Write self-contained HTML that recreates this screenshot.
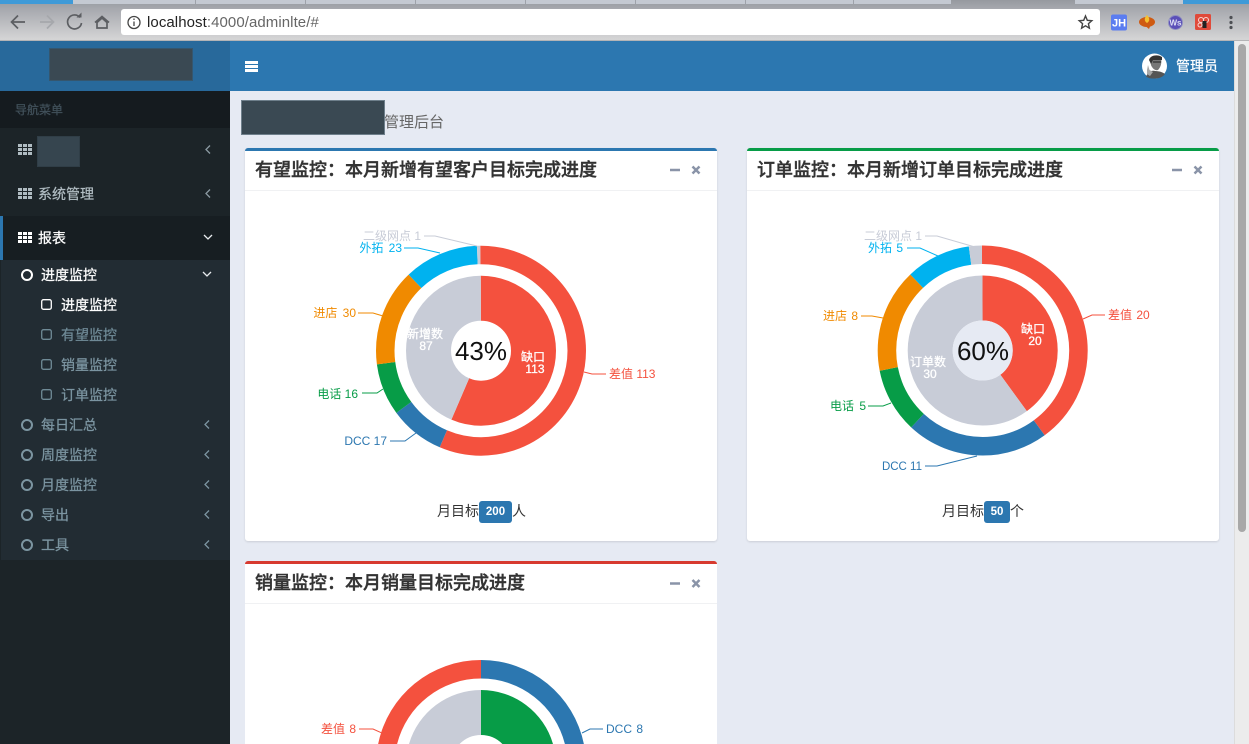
<!DOCTYPE html>
<html lang="zh"><head><meta charset="utf-8"><title>管理后台</title>
<style>
html,body{margin:0;padding:0;width:1249px;height:744px;overflow:hidden;background:#e6eaf3;font-family:"Liberation Sans","Noto Sans CJK SC",sans-serif}
body{position:relative}
div,span{position:absolute;box-sizing:border-box}
.t{white-space:nowrap;line-height:20px;font-size:14px;-webkit-text-stroke:.25px currentColor}
.box{background:#fff;border-radius:3px;box-shadow:0 1px 2px rgba(0,0,0,.12);border-top:3px solid #2c77b0}
.box .hd{left:0;right:0;top:0;height:40px;border-bottom:1px solid #f0f1f3}
.box .tt{left:10px;top:9px;font-size:18px;line-height:20px;color:#333;font-weight:500;white-space:nowrap;-webkit-text-stroke:.4px #333}
.foot{font-size:14px;color:#333;line-height:20px;white-space:nowrap}
.badge{background:#2c77b0;color:#fff;font-size:11.5px;font-weight:bold;border-radius:3px;text-align:center;line-height:23px;height:22px}
svg{position:absolute;left:0;top:0;display:block}
svg text{font-family:"Liberation Sans","Noto Sans CJK SC",sans-serif}
</style></head><body>

<!-- browser chrome -->
<div style="left:0;top:0;width:1249px;height:41px;background:linear-gradient(#96999f 0,#a5a7ad 8px,#d4d4d5 39px);border-bottom:1px solid #b4b4b6"></div>
<div style="left:73px;top:0;width:878px;height:4px;background:#c4c9d2"></div>
<div style="left:1075px;top:0;width:108px;height:4px;background:#c4c9d2"></div>
<div style="left:0;top:0;width:73px;height:4px;background:#3f9ad8"></div>
<div style="left:1183px;top:0;width:66px;height:4px;background:#3f9ad8"></div>
<div style="left:195px;top:0;width:1px;height:4px;background:#9ea2aa"></div>
<div style="left:305px;top:0;width:1px;height:4px;background:#9ea2aa"></div>
<div style="left:415px;top:0;width:1px;height:4px;background:#9ea2aa"></div>
<div style="left:525px;top:0;width:1px;height:4px;background:#9ea2aa"></div>
<div style="left:635px;top:0;width:1px;height:4px;background:#9ea2aa"></div>
<div style="left:745px;top:0;width:1px;height:4px;background:#9ea2aa"></div>
<div style="left:853px;top:0;width:1px;height:4px;background:#9ea2aa"></div>
<div style="left:121px;top:9px;width:979px;height:26px;background:#fff;border-radius:3px"></div>
<div style="left:147px;top:13px;font-size:15px;line-height:20px;white-space:nowrap;letter-spacing:.07px;color:#666"><span style="position:static;color:#222">localhost</span>:4000/adminlte/#</div>

<!-- header -->
<div style="left:0;top:41px;width:230px;height:50px;background:#28699b"></div>
<div style="left:230px;top:41px;width:1004px;height:50px;background:#2c77b0"></div>
<div style="left:49px;top:48px;width:144px;height:33px;background:#3a4953;border:1px solid #35566e"></div>
<div style="left:245px;top:61px;width:13px;height:2.500px;background:#fff"></div>
<div style="left:245px;top:65px;width:13px;height:2.500px;background:#fff"></div>
<div style="left:245px;top:69px;width:13px;height:2.500px;background:#fff"></div>
<div class="t" style="left:1176px;top:56px;color:#fff">管理员</div>

<!-- sidebar -->
<div style="left:0;top:91px;width:230px;height:653px;background:#1c2428"></div>
<div style="left:0;top:91px;width:230px;height:37px;background:#151b1f"></div>
<div style="left:0;top:216px;width:230px;height:44px;background:#171e22"></div>
<div style="left:0;top:216px;width:3px;height:44px;background:#2c77b0"></div>
<div style="left:1px;top:260px;width:229px;height:300px;background:#222c33"></div>
<div style="left:37px;top:136px;width:43px;height:31px;background:#36454f;border:1px solid #303e47"></div>
<div class="t" style="left:15px;top:100px;font-size:12px;color:#41505a">导航菜单</div>
<div class="t" style="left:38px;top:184px;color:#b0bcc2">系统管理</div>
<div class="t" style="left:38px;top:228px;color:#fff">报表</div>
<div class="t" style="left:41px;top:265px;color:#fff">进度监控</div>
<div class="t" style="left:61px;top:295px;color:#fff">进度监控</div>
<div class="t" style="left:61px;top:325px;color:#6f8a96">有望监控</div>
<div class="t" style="left:61px;top:355px;color:#7c95a1">销量监控</div>
<div class="t" style="left:61px;top:385px;color:#7c95a1">订单监控</div>
<div class="t" style="left:41px;top:415px;color:#7c95a1">每日汇总</div>
<div class="t" style="left:41px;top:445px;color:#7c95a1">周度监控</div>
<div class="t" style="left:41px;top:475px;color:#7c95a1">月度监控</div>
<div class="t" style="left:41px;top:505px;color:#7c95a1">导出</div>
<div class="t" style="left:41px;top:535px;color:#7c95a1">工具</div>

<!-- content -->
<div style="left:241px;top:100px;width:144px;height:35px;background:#3a4953;border:1px solid #6e7f8b"></div>
<div style="left:384px;top:113px;font-size:15px;line-height:20px;white-space:nowrap;color:#666">管理后台</div>

<div class="box" style="left:245px;top:148px;width:472px;height:393px;border-top-color:#2c77b0">
  <div class="hd"></div><div class="tt">有望监控：本月新增有望客户目标完成进度</div>
</div>
<div class="box" style="left:747px;top:148px;width:472px;height:393px;border-top-color:#079c47">
  <div class="hd"></div><div class="tt">订单监控：本月新增订单目标完成进度</div>
</div>
<div class="box" style="left:245px;top:561px;width:472px;height:183px;border-radius:3px 3px 0 0;box-shadow:none;border-top-color:#d73a2f">
  <div class="hd"></div><div class="tt">销量监控：本月销量目标完成进度</div>
</div>

<div class="foot" style="left:437px;top:501px">月目标</div>
<div class="badge" style="left:479px;top:501px;width:33px">200</div>
<div class="foot" style="left:512px;top:501px">人</div>
<div class="foot" style="left:942px;top:501px">月目标</div>
<div class="badge" style="left:984px;top:501px;width:26px">50</div>
<div class="foot" style="left:1010px;top:501px">个</div>

<!-- scrollbar -->
<div style="left:1234px;top:41px;width:15px;height:703px;background:#ececec;border-left:1px solid #dcdcdc"></div>
<div style="left:1238px;top:44px;width:8px;height:488px;background:#a8a8a8;border-radius:4px"></div>

<svg width="1249" height="744" viewBox="0 0 1249 744" fill="none">
  <!-- toolbar icons -->
  <g stroke="#5c5e62" stroke-width="1.7">
    <path d="M25 22H12M18 15.5L11.5 22L18 28.5"/>
    <path d="M40 22H53M47 15.5L53.5 22L47 28.5" stroke="#a6a8ac"/>
    <path d="M80 17.5A7 7 0 1 0 81.5 23"/>
    <path d="M97 28V22.500L102 18L107 22.500V28H97Z"/>
  </g>
  <path d="M76.500 17.500H81.500V12.500Z" fill="#5c5e62"/>
  <path d="M95 22.500L102 16.500L109 22.500" stroke="#5c5e62" stroke-width="1.700"/>
  <circle cx="134" cy="22.500" r="6" stroke="#444" stroke-width="1.300"/>
  <path d="M134 21.500V26M134 18.500V20" stroke="#444" stroke-width="1.300"/>
  <path d="M1085.500 16L1087.300 20.300L1091.800 20.700L1088.400 23.700L1089.400 28.200L1085.500 25.800L1081.600 28.200L1082.600 23.700L1079.200 20.700L1083.700 20.300Z" stroke="#444" stroke-width="1.400"/>
  <rect x="1111" y="14.500" width="16" height="16" rx="2" fill="#5b7df0"/>
  <text x="1119" y="26.500" font-size="11" font-weight="bold" fill="#fff" text-anchor="middle">JH</text>
  <ellipse cx="1147" cy="22" rx="8" ry="5" fill="#cf5a12"/>
  <path d="M1147 15C1150 18 1150 21 1147 23C1144 21 1144 18 1147 15Z" fill="#f5c030"/>
  <path d="M1146 26.500L1150 26.500L1149 29Z" fill="#cf5a12"/>
  <circle cx="1175.500" cy="22.500" r="7" fill="#5b4fb8" stroke="#8f8fc0"/>
  <text x="1175.500" y="25.500" font-size="8" font-weight="bold" fill="#dfe0f5" text-anchor="middle">Ws</text>
  <rect x="1195" y="14" width="16" height="16" rx="1.500" fill="#e04a3a"/>
  <g stroke="#f8d8d4" stroke-width="1"><circle cx="1201" cy="20" r="2.500"/><circle cx="1206" cy="20" r="2.500"/><circle cx="1200" cy="25" r="2"/></g>
  <rect x="1202.500" y="21" width="4" height="7" fill="#222"/>
  <g fill="#4d4f54"><circle cx="1231" cy="17.500" r="1.600"/><circle cx="1231" cy="22.500" r="1.600"/><circle cx="1231" cy="27.500" r="1.600"/></g>

  <!-- avatar -->
  <circle cx="1154.500" cy="66" r="12.500" fill="#fff"/>
  <path d="M1150 60C1151 56 1158 55 1161 58C1162 62 1161 67 1158 70C1155 71 1152 68 1151 65Z" fill="#777"/>
  <path d="M1149 60C1150 55 1158 54 1162 57L1162 60L1153 60L1151 64Z" fill="#333"/>
  <path d="M1153 62H1161" stroke="#222" stroke-width="1"/>
  <path d="M1146 78C1147 72 1151 70 1155 71C1160 71 1164 73 1165 74C1162 78 1158 78.500 1154 78.500C1151 78.500 1148 78.500 1146 76Z" fill="#555"/>
  <path d="M1147 70L1148 65L1149.500 70L1153 72L1150 76L1147 74Z" fill="#a8a8a8"/>

  <!-- sidebar th icons -->
  <defs>
    <g id="th"><path d="M0 0h4v3H0zM5 0h4v3H5zM10 0h4v3h-4zM0 4h4v3H0zM5 4h4v3H5zM10 4h4v3h-4zM0 8h4v3H0zM5 8h4v3H5zM10 8h4v3h-4z"/></g>
  </defs>
  <use href="#th" x="18" y="144" fill="#b0bcc2"/>
  <use href="#th" x="18" y="188" fill="#b0bcc2"/>
  <use href="#th" x="18" y="232" fill="#fff"/>
  <!-- chevrons -->
  <g stroke="#8b9aa2" stroke-width="1.300">
    <path d="M210 145.500L206 149.500L210 153.500"/>
    <path d="M210 189.500L206 193.500L210 197.500"/>
    <path d="M204 235L208 239L212 235" stroke="#e8ecef"/>
    <path d="M203 272L207 276L211 272" stroke="#e8ecef"/>
    <path d="M209 420.500L205 424.500L209 428.500" stroke="#7c95a1"/>
    <path d="M209 450.500L205 454.500L209 458.500" stroke="#7c95a1"/>
    <path d="M209 480.500L205 484.500L209 488.500" stroke="#7c95a1"/>
    <path d="M209 510.500L205 514.500L209 518.500" stroke="#7c95a1"/>
    <path d="M209 540.500L205 544.500L209 548.500" stroke="#7c95a1"/>
  </g>
  <!-- circles -->
  <g stroke-width="2" stroke="#7c95a1">
    <circle cx="27" cy="275" r="5" stroke="#fff"/>
    <circle cx="27" cy="425" r="5"/><circle cx="27" cy="455" r="5"/><circle cx="27" cy="485" r="5"/><circle cx="27" cy="515" r="5"/><circle cx="27" cy="545" r="5"/>
  </g>
  <!-- squares -->
  <g stroke-width="1.300" stroke="#6f8a96">
    <rect x="41.700" y="299.700" width="9.600" height="9.600" rx="1.800" stroke="#fff"/>
    <rect x="41.700" y="329.700" width="9.600" height="9.600" rx="1.800"/>
    <rect x="41.700" y="359.700" width="9.600" height="9.600" rx="1.800"/>
    <rect x="41.700" y="389.700" width="9.600" height="9.600" rx="1.800"/>
  </g>

  <!-- box tools -->
  <g stroke="#8a94a8" stroke-width="2.500">
    <path d="M670 170H680M692.500 166.500L699.500 173.500M699.500 166.500L692.500 173.500"/>
    <path d="M1172 170H1182M1194.500 166.500L1201.500 173.500M1201.500 166.500L1194.500 173.500"/>
    <path d="M670 583.500H680M692.500 580L699.500 587M699.500 580L692.500 587"/>
  </g>

  <!-- chart 1 -->
  <g transform="rotate(-90 481 350.700)">
    <circle cx="481" cy="350.700" r="95.750" stroke-width="18.500" pathLength="200" stroke="#f4513e" stroke-dasharray="113 87"/>
    <circle cx="481" cy="350.700" r="95.750" stroke-width="18.500" pathLength="200" stroke="#2c77b0" stroke-dasharray="17 183" stroke-dashoffset="-113"/>
    <circle cx="481" cy="350.700" r="95.750" stroke-width="18.500" pathLength="200" stroke="#079c47" stroke-dasharray="16 184" stroke-dashoffset="-130"/>
    <circle cx="481" cy="350.700" r="95.750" stroke-width="18.500" pathLength="200" stroke="#f08a00" stroke-dasharray="30 170" stroke-dashoffset="-146"/>
    <circle cx="481" cy="350.700" r="95.750" stroke-width="18.500" pathLength="200" stroke="#00b2ef" stroke-dasharray="23 177" stroke-dashoffset="-176"/>
    <circle cx="481" cy="350.700" r="95.750" stroke-width="18.500" pathLength="200" stroke="#c8ccd7" stroke-dasharray="1 199" stroke-dashoffset="-199"/>
    <circle cx="481" cy="350.700" r="52.500" stroke-width="45" pathLength="200" stroke="#f4513e" stroke-dasharray="113 87"/>
    <circle cx="481" cy="350.700" r="52.500" stroke-width="45" pathLength="200" stroke="#c8ccd7" stroke-dasharray="87 113" stroke-dashoffset="-113"/>
  </g>
  <g stroke-width="1">
    <path d="M424 236H435L477 246" stroke="#c8ccd7"/>
    <path d="M404 248H418L440 253" stroke="#00b2ef"/>
    <path d="M358 313H373L383 316" stroke="#f08a00"/>
    <path d="M362 393H377L383 389" stroke="#079c47"/>
    <path d="M390 441H405L416 433" stroke="#2c77b0"/>
    <path d="M606 374H592L584 372" stroke="#f4513e"/>
  </g>
  <g font-size="12">
    <text x="421" y="240" text-anchor="end" fill="#c8ccd7">二级网点 1</text>
    <text x="402" y="252" text-anchor="end" fill="#00b2ef" word-spacing="2">外拓 23</text>
    <text x="356" y="317" text-anchor="end" fill="#f08a00" word-spacing="2">进店 30</text>
    <text x="358" y="398" text-anchor="end" fill="#079c47">电话 16</text>
    <text x="387" y="445" text-anchor="end" fill="#2c77b0">DCC 17</text>
    <text x="609" y="378" fill="#f4513e">差值 113</text>
  </g>
  <g font-size="12" fill="#fff" stroke="#fff" stroke-width=".3" text-anchor="middle">
    <text x="425" y="338">新增数</text><text x="426" y="350">87</text>
    <text x="533" y="361">缺口</text><text x="535" y="373">113</text>
  </g>
  <text x="481" y="360" font-size="26" fill="#111" text-anchor="middle">43%</text>

  <!-- chart 2 -->
  <g transform="rotate(-90 982.700 350.500)">
    <circle cx="982.700" cy="350.500" r="95.750" stroke-width="18.500" pathLength="50" stroke="#f4513e" stroke-dasharray="20 30"/>
    <circle cx="982.700" cy="350.500" r="95.750" stroke-width="18.500" pathLength="50" stroke="#2c77b0" stroke-dasharray="11 39" stroke-dashoffset="-20"/>
    <circle cx="982.700" cy="350.500" r="95.750" stroke-width="18.500" pathLength="50" stroke="#079c47" stroke-dasharray="5 45" stroke-dashoffset="-31"/>
    <circle cx="982.700" cy="350.500" r="95.750" stroke-width="18.500" pathLength="50" stroke="#f08a00" stroke-dasharray="8 42" stroke-dashoffset="-36"/>
    <circle cx="982.700" cy="350.500" r="95.750" stroke-width="18.500" pathLength="50" stroke="#00b2ef" stroke-dasharray="5 45" stroke-dashoffset="-44"/>
    <circle cx="982.700" cy="350.500" r="95.750" stroke-width="18.500" pathLength="50" stroke="#c8ccd7" stroke-dasharray="1 49" stroke-dashoffset="-49"/>
    <circle cx="982.700" cy="350.500" r="52.500" stroke-width="45" pathLength="50" stroke="#f4513e" stroke-dasharray="20 30"/>
    <circle cx="982.700" cy="350.500" r="52.500" stroke-width="45" pathLength="50" stroke="#c8ccd7" stroke-dasharray="30 20" stroke-dashoffset="-20"/>
  </g>
  <circle cx="982.700" cy="350.500" r="30" fill="#e6eaf3"/>
  <g stroke-width="1">
    <path d="M925 236H937L975 247" stroke="#c8ccd7"/>
    <path d="M907 248H920L938 256" stroke="#00b2ef"/>
    <path d="M861 316H872L883 318" stroke="#f08a00"/>
    <path d="M868 406H883L891 403" stroke="#079c47"/>
    <path d="M925 466H937L977 456" stroke="#2c77b0"/>
    <path d="M1105 315H1092L1083 319" stroke="#f4513e"/>
  </g>
  <g font-size="12">
    <text x="922" y="240" text-anchor="end" fill="#c8ccd7">二级网点 1</text>
    <text x="903" y="252" text-anchor="end" fill="#00b2ef" word-spacing="1">外拓 5</text>
    <text x="858" y="320" text-anchor="end" fill="#f08a00" word-spacing="1">进店 8</text>
    <text x="866" y="410" text-anchor="end" fill="#079c47" word-spacing="2">电话 5</text>
    <text x="922" y="470" text-anchor="end" fill="#2c77b0" font-size="11.500">DCC 11</text>
    <text x="1108" y="319" fill="#f4513e" word-spacing="1">差值 20</text>
  </g>
  <g font-size="12" fill="#fff" stroke="#fff" stroke-width=".3" text-anchor="middle">
    <text x="1033" y="333">缺口</text><text x="1035" y="345">20</text>
    <text x="928" y="366">订单数</text><text x="930" y="378">30</text>
  </g>
  <text x="983" y="360" font-size="26" fill="#111" text-anchor="middle">60%</text>

  <!-- chart 3, cut at the bottom of the frame -->
  <path d="M481 660A105 105 0 0 1 583.880 744H564.900A86.500 86.500 0 0 0 481 678.500Z" fill="#2c77b0"/>
  <path d="M481 660A105 105 0 0 0 378.120 744H397.100A86.500 86.500 0 0 1 481 678.500Z" fill="#f4513e"/>
  <path d="M481 690A75 75 0 0 1 553 744H502.400A30 30 0 0 0 481 735Z" fill="#079c47"/>
  <path d="M481 690A75 75 0 0 0 409 744H459.600A30 30 0 0 1 481 735Z" fill="#c8ccd7"/>
  <path d="M359 729H373L382 733" stroke="#f4513e"/>
  <path d="M603 729H590L582 733" stroke="#2c77b0"/>
  <text x="356" y="733" font-size="12" text-anchor="end" fill="#f4513e" word-spacing="1">差值 8</text>
  <text x="606" y="733" font-size="12" fill="#2c77b0" word-spacing="1">DCC 8</text>
</svg>
</body></html>
